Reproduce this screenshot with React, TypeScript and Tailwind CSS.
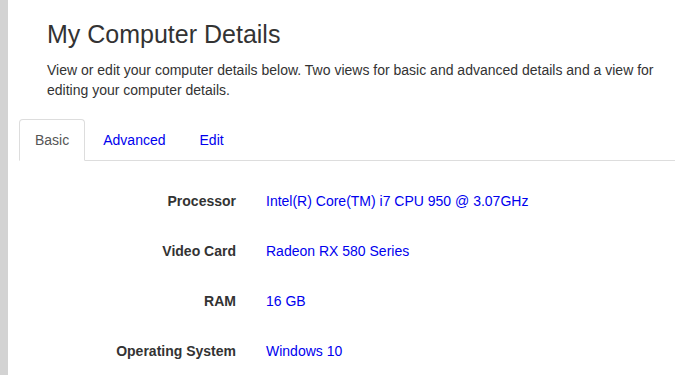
const details = [
  { label: 'Processor', value: 'Intel(R) Core(TM) i7 CPU 950 @ 3.07GHz' },
  { label: 'Video Card', value: 'Radeon RX 580 Series' },
  { label: 'RAM', value: '16 GB' },
  { label: 'Operating System', value: 'Windows 10' },
];

const tabs = ['Basic', 'Advanced', 'Edit'];

export default function App() {
  return (
    <div className="flex min-h-[375px] bg-white font-['Liberation_Sans',Arial,sans-serif] text-[14px] text-[#333]">
      <div className="w-[8px] shrink-0 bg-[#d3d3d3]" />

      <main className="flex-1 pl-[11px] pr-[10px]">
        <header className="pl-[28px] pt-[21px]">
          <h1 className="text-[25px] leading-[27.5px] font-normal text-[#333]">My Computer Details</h1>
          <p className="mt-[11px] max-w-[620px] leading-[20px]">
            View or edit your computer details below. Two views for basic and advanced details and a view for
            editing your computer details.
          </p>
        </header>

        <ul className="mt-[19px] flex border-b border-[#ddd]">
          {tabs.map((tab, i) => {
            const active = i === 0;
            return (
              <li key={tab} className="-mb-px mr-[2px]">
                <a
                  href="#"
                  className={`block rounded-t-[4px] border px-[15px] py-[10px] leading-[20px] ${
                    active
                      ? 'border-[#ddd] border-b-transparent bg-white text-[#555]'
                      : 'border-transparent text-[#0000ee]'
                  }`}
                >
                  {tab}
                </a>
              </li>
            );
          })}
        </ul>

        <dl className="flex flex-col gap-[30px] pt-[30px]">
          {details.map((row) => (
            <div key={row.label} className="flex leading-[20px]">
              <dt className="w-[217px] shrink-0 text-right font-bold">{row.label}</dt>
              <dd className="pl-[30px] text-[#0000ee]">{row.value}</dd>
            </div>
          ))}
        </dl>
      </main>
    </div>
  );
}
